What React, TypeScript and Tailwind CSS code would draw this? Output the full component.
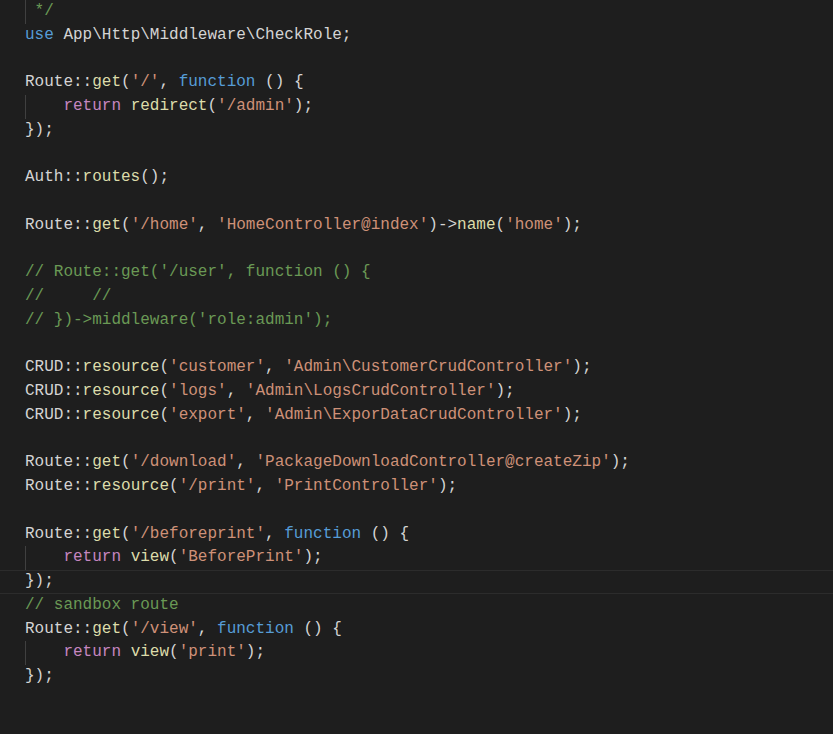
type Tok = [string, string];

const C = {
  t: "text-[#d4d4d4]",
  k: "text-[#569cd6]",
  s: "text-[#ce9178]",
  c: "text-[#6a9955]",
  r: "text-[#c586c0]",
  f: "text-[#dcdcaa]",
};

const lines: { toks: Tok[]; guide?: boolean; current?: boolean }[] = [
  { toks: [["c", " */"]], guide: true },
  { toks: [["k", "use"], ["t", " App\\Http\\Middleware\\CheckRole;"]] },
  { toks: [] },
  { toks: [["t", "Route::"], ["f", "get"], ["t", "("], ["s", "'/'"], ["t", ", "], ["k", "function"], ["t", " () {"]] },
  { toks: [["t", "    "], ["r", "return"], ["t", " "], ["f", "redirect"], ["t", "("], ["s", "'/admin'"], ["t", ");"]], guide: true },
  { toks: [["t", "});"]] },
  { toks: [] },
  { toks: [["t", "Auth::"], ["f", "routes"], ["t", "();"]] },
  { toks: [] },
  { toks: [["t", "Route::"], ["f", "get"], ["t", "("], ["s", "'/home'"], ["t", ", "], ["s", "'HomeController@index'"], ["t", ")->"], ["f", "name"], ["t", "("], ["s", "'home'"], ["t", ");"]] },
  { toks: [] },
  { toks: [["c", "// Route::get('/user', function () {"]] },
  { toks: [["c", "//     //"]] },
  { toks: [["c", "// })->middleware('role:admin');"]] },
  { toks: [] },
  { toks: [["t", "CRUD::"], ["f", "resource"], ["t", "("], ["s", "'customer'"], ["t", ", "], ["s", "'Admin\\CustomerCrudController'"], ["t", ");"]] },
  { toks: [["t", "CRUD::"], ["f", "resource"], ["t", "("], ["s", "'logs'"], ["t", ", "], ["s", "'Admin\\LogsCrudController'"], ["t", ");"]] },
  { toks: [["t", "CRUD::"], ["f", "resource"], ["t", "("], ["s", "'export'"], ["t", ", "], ["s", "'Admin\\ExporDataCrudController'"], ["t", ");"]] },
  { toks: [] },
  { toks: [["t", "Route::"], ["f", "get"], ["t", "("], ["s", "'/download'"], ["t", ", "], ["s", "'PackageDownloadController@createZip'"], ["t", ");"]] },
  { toks: [["t", "Route::"], ["f", "resource"], ["t", "("], ["s", "'/print'"], ["t", ", "], ["s", "'PrintController'"], ["t", ");"]] },
  { toks: [] },
  { toks: [["t", "Route::"], ["f", "get"], ["t", "("], ["s", "'/beforeprint'"], ["t", ", "], ["k", "function"], ["t", " () {"]] },
  { toks: [["t", "    "], ["r", "return"], ["t", " "], ["f", "view"], ["t", "("], ["s", "'BeforePrint'"], ["t", ");"]], guide: true },
  { toks: [["t", "});"]], current: true },
  { toks: [["c", "// sandbox route"]] },
  { toks: [["t", "Route::"], ["f", "get"], ["t", "("], ["s", "'/view'"], ["t", ", "], ["k", "function"], ["t", " () {"]] },
  { toks: [["t", "    "], ["r", "return"], ["t", " "], ["f", "view"], ["t", "("], ["s", "'print'"], ["t", ");"]], guide: true },
  { toks: [["t", "});"]] },
];

export default function App() {
  return (
    <div className="w-[833px] h-[734px] bg-[#1e1e1e] overflow-hidden font-[family-name:Liberation_Mono] text-[16px] leading-[23.75px]">
      {lines.map((l, i) => (
        <div
          key={i}
          className={`relative h-[23.75px] pl-[25px] whitespace-pre ${l.current ? "border-y border-[#2c2c2c] leading-[21.75px]" : ""}`}
        >
          {l.guide && <span className="absolute left-[25px] top-0 bottom-0 w-px bg-[#404040]" />}
          {l.toks.map(([c, s], j) => (
            <span key={j} className={C[c as keyof typeof C]}>{s}</span>
          ))}
          {l.toks.length === 0 && " "}
        </div>
      ))}
    </div>
  );
}
